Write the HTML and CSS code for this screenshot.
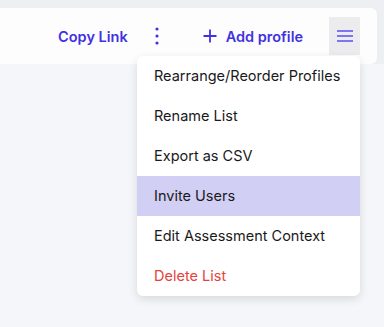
FILE: index.html
```html
<!DOCTYPE html>
<html lang="en">
<head>
    <meta charset="UTF-8">
    <title>List Actions</title>
    <link rel="stylesheet" href="styles.css">
</head>
<body>
    <div class="toolbar">
        <a href="#" class="link-btn">Copy Link</a>
        <button class="icon-btn more-btn" title="More">
            <svg width="4" height="18" viewBox="0 0 4 18"><circle cx="2" cy="2" r="1.6"/><circle cx="2" cy="9" r="1.6"/><circle cx="2" cy="16" r="1.6"/></svg>
        </button>
        <a href="#" class="link-btn add-btn">
            <svg width="14" height="14" viewBox="0 0 14 14"><path d="M7 0.5v13M0.5 7h13" stroke="currentColor" stroke-width="1.8" fill="none"/></svg>
            Add profile
        </a>
        <div class="menu-wrap">
            <button class="icon-btn menu-btn" title="Menu">
                <svg width="16" height="12" viewBox="0 0 16 12"><path d="M0 1h16M0 6h16M0 11h16" stroke="currentColor" stroke-width="1.6"/></svg>
            </button>
            <div class="dropdown">
                <div class="dropdown-item">Rearrange/Reorder Profiles</div>
                <div class="dropdown-item">Rename List</div>
                <div class="dropdown-item">Export as CSV</div>
                <div class="dropdown-item active">Invite Users</div>
                <div class="dropdown-item">Edit Assessment Context</div>
                <div class="dropdown-item danger">Delete List</div>
            </div>
        </div>
    </div>
</body>
</html>
```
FILE: styles.css
```css
body {
    font-family: Inter, "Noto Sans", Arial, sans-serif;
    margin: 0;
    padding: 8px 0 0;
    background: linear-gradient(to bottom, #eeeff2 0, #eeeff2 64px, #f5f6f9 64px);
    height: 327px;
    box-sizing: border-box;
}

.toolbar {
    display: flex;
    align-items: center;
    justify-content: flex-end;
    height: 56px;
    width: 377px;
    padding-right: 17px;
    box-sizing: border-box;
    background: #fdfdfd;
    border-radius: 0 6px 6px 0;
}

.link-btn {
    display: flex;
    align-items: center;
    gap: 9px;
    color: #4231e0;
    font-weight: 600;
    font-size: 14.5px;
    text-decoration: none;
    white-space: nowrap;
}

.icon-btn {
    border: none;
    background: none;
    padding: 0;
    cursor: pointer;
    display: flex;
    align-items: center;
    justify-content: center;
}

.more-btn {
    fill: #4231e0;
    width: 20px;
    height: 30px;
    margin: 0 36px 0 19px;
}

.add-btn {
    margin-right: 26px;
}

.menu-wrap {
    position: relative;
}

.menu-btn {
    width: 31px;
    height: 38px;
    background: #ececef;
    color: #5a4ef2;
}

.dropdown {
    position: absolute;
    top: 39px;
    right: 0;
    width: 223px;
    background: #fff;
    border-radius: 6px;
    box-shadow: 0 3px 10px rgba(0,0,0,0.12);
    overflow: hidden;
}

.dropdown-item {
    height: 40px;
    line-height: 40px;
    padding: 0 17px;
    font-size: 14.5px;
    color: #1a1a1a;
    white-space: nowrap;
}

.dropdown-item.active {
    background: #d2cff5;
}

.dropdown-item.danger {
    color: #e5423a;
}
```
